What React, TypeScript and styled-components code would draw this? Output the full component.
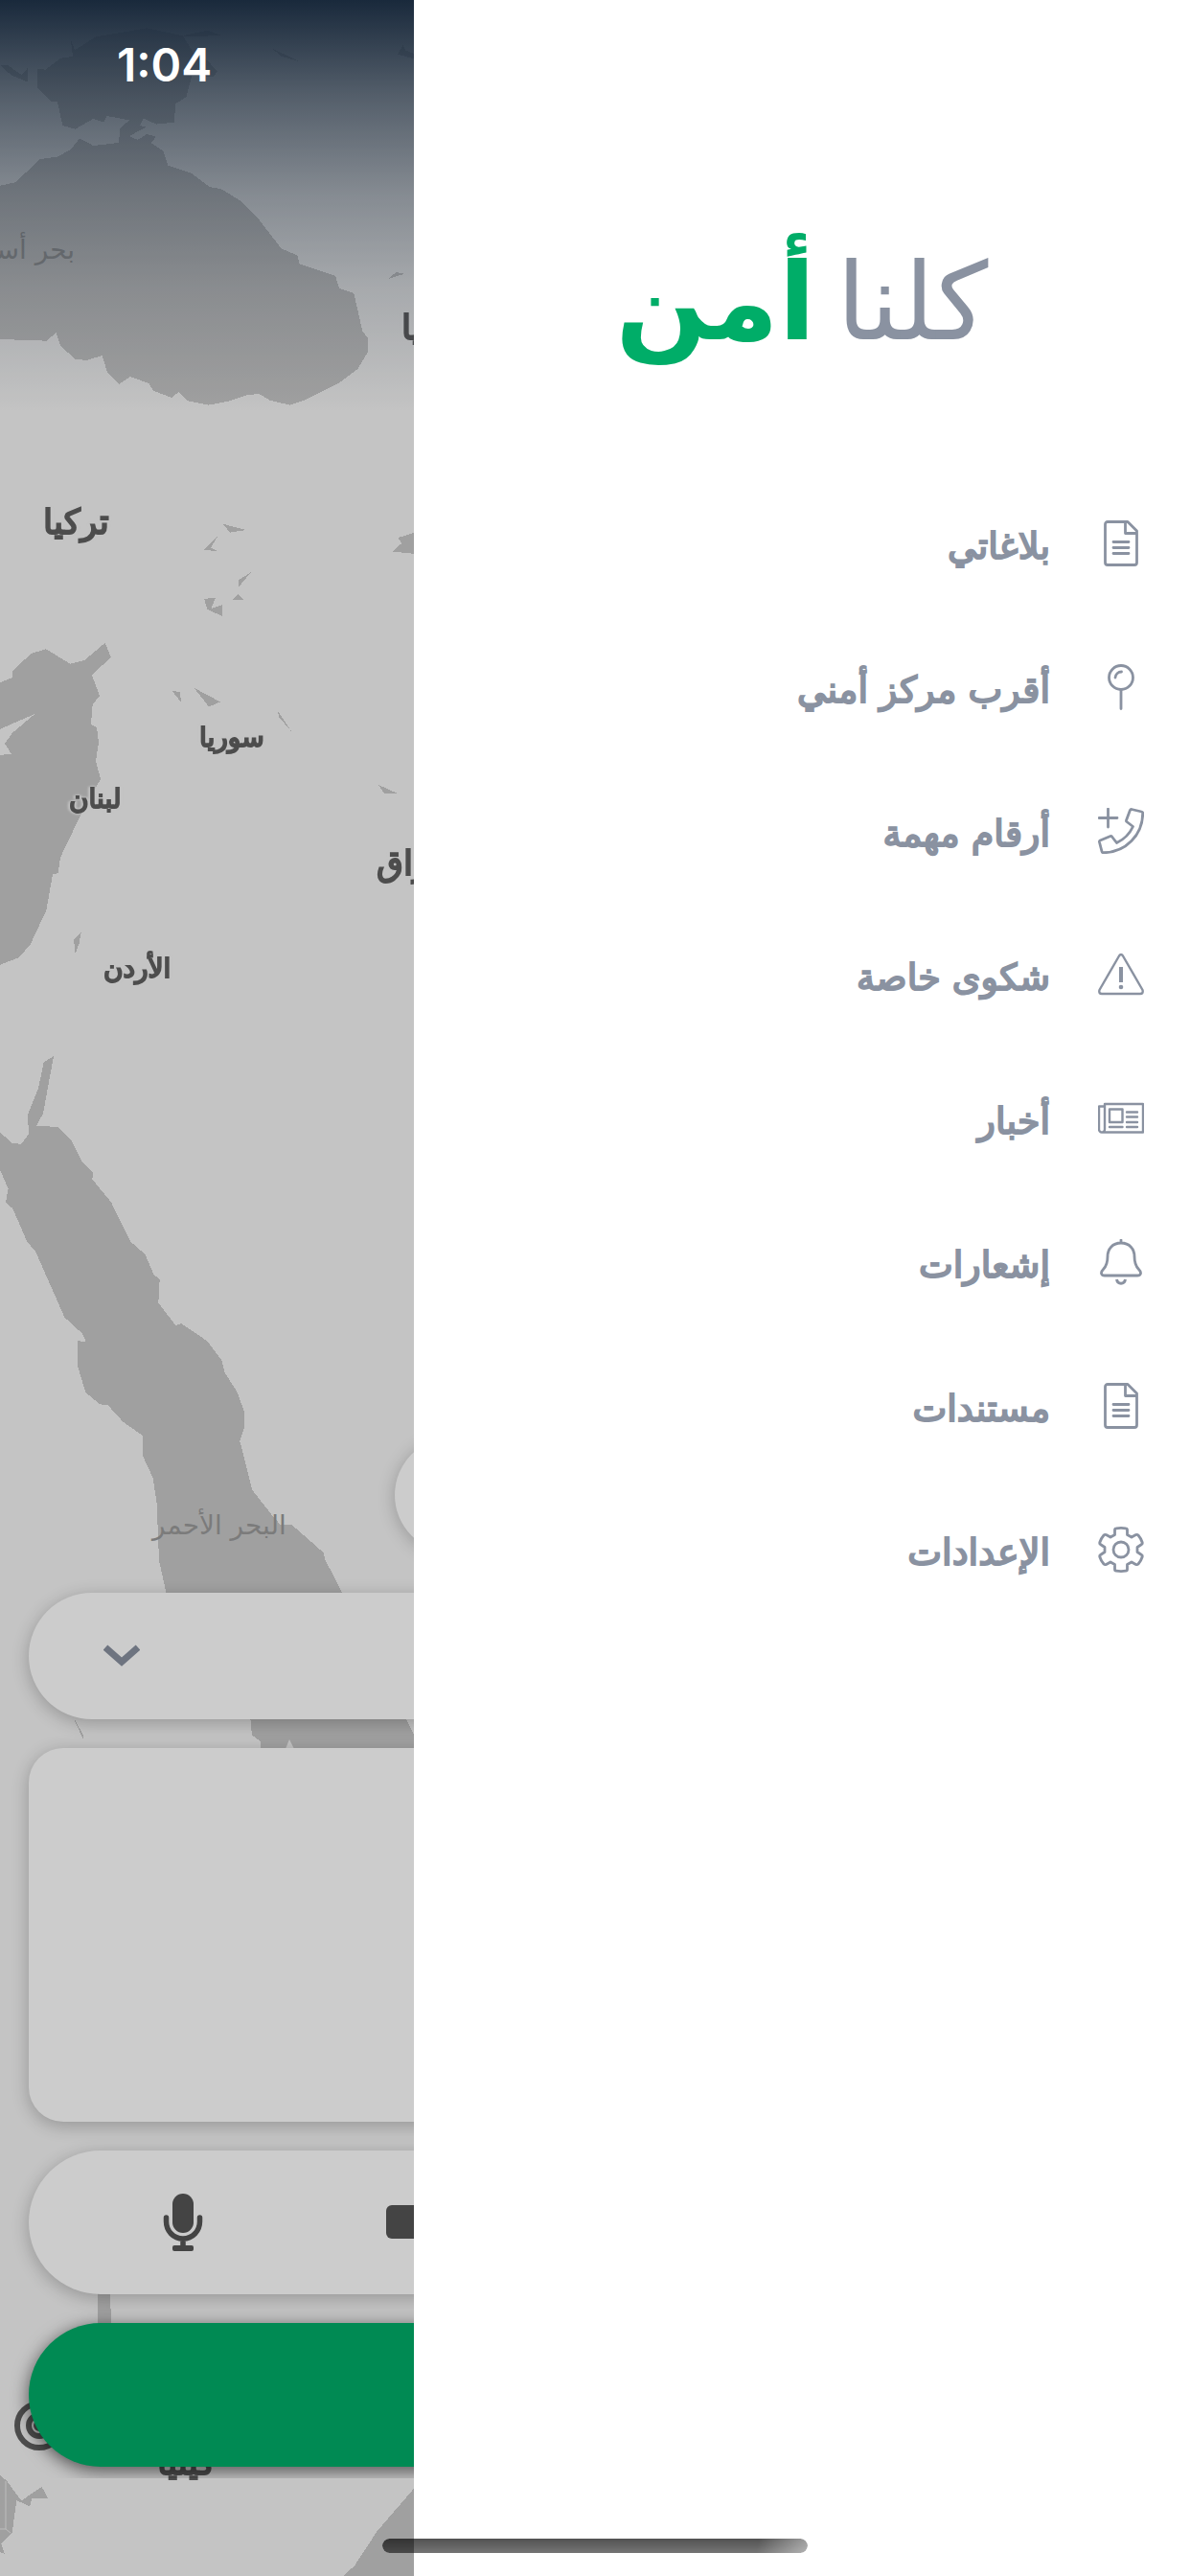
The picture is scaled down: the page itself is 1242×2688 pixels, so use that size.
import React from "react";
import styled, { createGlobalStyle } from "styled-components";

const GREEN = "#00ad68";
const SLATE = "#8a92a1";
const ARABIC = '"DejaVu Sans", "Noto Sans", sans-serif';

const GlobalStyle = createGlobalStyle`
  *, *::before, *::after { box-sizing: border-box; }
  body { margin: 0; background: #c4c4c4; font-family: ${ARABIC}; }
  button, select, textarea { font: inherit; border: 0; margin: 0; padding: 0; }
`;

const Screen = styled.div`
  position: relative;
  display: grid;
  min-height: 100vh;
  overflow: hidden;
  background: #f5f5f5;
  > * { grid-area: 1 / 1; min-width: 0; }
`;

/* ---------- map ---------- */

const MapLayer = styled.div`
  position: absolute;
  inset: 0;
  overflow: hidden;
`;

const MapDrawing = styled.svg`
  display: block;
  width: 100%;
  height: 100%;
`;

const MapLabel = styled.span<{ $x: number; $y: number; $size: number; $sea?: boolean; $end?: boolean }>`
  position: absolute;
  top: ${(p) => p.$y}px;
  ${(p) => (p.$end ? `right: calc(100% - ${p.$x}px);` : `left: ${p.$x}px;`)}
  font-size: ${(p) => p.$size}px;
  line-height: 40px;
  color: ${(p) => (p.$sea ? "#9a9a9a" : "#616161")};
  -webkit-text-stroke: ${(p) => (p.$sea ? 0 : 2)}px currentColor;
  white-space: nowrap;
  filter: ${(p) => (p.$sea ? "none" : "drop-shadow(2px 0 1px #f5f5f5) drop-shadow(-2px 0 1px #f5f5f5)")};
`;

const TopFade = styled.div`
  position: absolute;
  inset: 0 0 auto;
  height: 430px;
  background: linear-gradient(
    rgba(32, 52, 75, 1) 0%,
    rgba(32, 52, 75, 0.66) 23%,
    rgba(32, 52, 75, 0.37) 47%,
    rgba(32, 52, 75, 0.17) 70%,
    rgba(32, 52, 75, 0) 100%
  );
`;

const labels = [
  { text: "بحر أسود", x: 78, y: 241, size: 28, sea: true, end: true },
  { text: "روسيا", x: 419, y: 322, size: 36 },
  { text: "تركيا", x: 45, y: 525, size: 36 },
  { text: "سوريا", x: 208, y: 750, size: 28 },
  { text: "لبنان", x: 72, y: 814, size: 28 },
  { text: "العراق", x: 393, y: 881, size: 36 },
  { text: "الأردن", x: 108, y: 991, size: 28 },
  { text: "البحر الأحمر", x: 159, y: 1572, size: 28, sea: true },
  { text: "كينيا", x: 164, y: 2550, size: 36 },
];

function WorldMap() {
  return (
    <MapLayer>
      <MapDrawing viewBox="0 0 1242 2688" preserveAspectRatio="xMinYMin slice" aria-hidden="true">
        <g fill="#c9c9c9" shapeRendering="crispEdges">
          <g transform="scale(.33333)">
            <path d="M0 581L48 571L126 498L180 491L223 467L249 433L292 456L372 447L376 402L405 376L334 363L324 383L292 372L236 404L196 393L180 319L160 318L118 275V216L143 218L190 182L228 177L221 122L234 157L300 115L460 88L573 112L605 165L650 190L681 224L668 240L601 236L583 304L549 325L546 383L489 389L449 370L438 394L460 396L405 426L431 438L460 420L489 428L473 447L511 473L526 518L597 541L658 586L692 591L750 627L812 689L881 778L932 800L937 826L1050 863L1062 903L1108 918L1135 1037L1152 1058V1102L1120 1155L1060 1200L953 1253L907 1268L845 1253L811 1233L773 1237L720 1255L653 1268L588 1255L560 1227L537 1245L480 1223L466 1200L407 1179L373 1203L336 1165L320 1113L270 1128L236 1124L189 1083L176 1041L146 1067L0 1062Z" />
            <path d="M0 204H24L67 234L87 213V257L35 235ZM850 150L935 192L880 176ZM1215 873L1240 852L1267 857ZM1245 170L1262 141L1270 158L1296 168V184ZM570 112L650 95L690 110L610 115Z" />
          </g>
          <g transform="translate(0 460) scale(.33333 .38265)">
            <path d="M0 659L38 646V628L98 580L144 568L220 608L265 598L329 551L347 590L288 639L312 695L290 719L285 773L303 782L309 823L300 873L315 922L245 1034L189 1136L182 1179L165 1182L145 1280L93 1377L56 1410L0 1429V857L36 854L15 826L38 797L109 745L0 786Z" />
            <path d="M699 227L771 243L720 250ZM684 257L660 292L684 302L638 297ZM786 358L747 399V380ZM728 433L745 418L763 433ZM639 431L675 428L661 458L696 447V478L650 460ZM539 682L564 685L567 713ZM608 674L690 712L654 725ZM870 737L912 792L873 753ZM1185 938L1248 963H1204ZM254 1341L248 1370L236 1398L231 1361ZM1229 302L1257 280L1247 264L1296 251V308Z" />
          </g>
          <g transform="translate(0 1060) scale(.33333 .38265)">
            <path d="M0 318L38 347L66 350L90 322L87 269L120 198L137 126L168 110L135 266L114 300L182 303L225 342L257 397L291 428L289 446L348 508L408 615L455 651L481 705L500 719L496 783L550 844L567 839L649 887L694 939L703 972L742 1025L765 1080V1122L751 1160L790 1293L850 1360L878 1388H914L1013 1464L1018 1483L1200 1790L1330 2020H816V1978L789 1962L783 1905L600 1800L519 1568L498 1485L491 1330L479 1260L447 1200V1145L385 1107L338 1062L312 1059L268 1027L243 955V886L270 890L257 866L202 822L110 640L86 618L40 526L18 508L26 472L0 420Z" />
            <path d="M225 1905L260 1960V1972Z" />
          </g>
          <g transform="translate(0 2200) scale(.33333)">
            <path d="M306 560H345L348 690H306ZM0 1149L20 1165L67 1228L131 1185L150 1220H100L93 1247L67 1234L52 1228L38 1328L4 1362L15 1395L0 1390ZM1296 1190L1180 1325L1110 1432L1075 1464H1330V1160Z" />
          </g>
        </g>
        <path d="M298 1825L302 1815L307 1825Z" fill="#f5f5f5" />
        <path d="M6 2589V2639L11 2643M0 2639H6" fill="none" stroke="#ececec" />
        <g fill="none" stroke="#616161" strokeWidth="6">
          <circle cx="41" cy="2531" r="23" />
          <circle cx="41" cy="2531" r="11" />
          <circle cx="41" cy="2531" r="3" />
        </g>
      </MapDrawing>
      {labels.map((l) => (
        <MapLabel key={l.text} dir="rtl" $x={l.x} $y={l.y} $size={l.size} $sea={l.sea} $end={l.end}>
          {l.text}
        </MapLabel>
      ))}
      <TopFade />
    </MapLayer>
  );
}

/* ---------- report form behind the drawer ---------- */

const ReportForm = styled.form`
  position: relative;
  display: flex;
  flex-direction: column;
  justify-content: flex-end;
  gap: 30px;
  margin-bottom: 102px;
  padding: 0 30px 12px;
  overflow: hidden;
`;

const LocateButton = styled.button`
  width: 120px;
  height: 120px;
  margin: 0 0 12px 382px;
  border-radius: 50%;
  background: #fff;
  box-shadow: 0 3px 18px rgba(0, 0, 0, 0.22);
`;

const cardShadow = "0 4px 18px rgba(0, 0, 0, 0.24)";

const SelectField = styled.label`
  display: flex;
  flex-direction: row-reverse;
  align-items: center;
  height: 132px;
  padding: 0 78px;
  border-radius: 66px;
  background: #fff;
  box-shadow: ${cardShadow};
`;

const TypeSelect = styled.select`
  flex: 1;
  min-width: 0;
  height: 100%;
  appearance: none;
  background: transparent;
`;

const Details = styled.textarea`
  height: 390px;
  padding: 36px;
  border-radius: 36px;
  resize: none;
  background: #fff;
  box-shadow: ${cardShadow};
`;

const MediaBar = styled.div`
  display: flex;
  align-items: center;
  gap: 190px;
  height: 150px;
  padding: 0 139px;
  border-radius: 75px;
  background: #fff;
  box-shadow: ${cardShadow};
`;

const MediaButton = styled.button`
  display: flex;
  background: transparent;
  color: #555;
`;

const SendButton = styled.button`
  height: 150px;
  border-radius: 75px;
  background: ${GREEN};
  box-shadow: 0 4px 18px rgba(0, 0, 0, 0.6);
`;

const Scrim = styled.div`
  position: absolute;
  inset: 0;
  background: rgba(0, 0, 0, 0.2);
`;

/* ---------- system chrome ---------- */

const StatusTime = styled.time`
  position: absolute;
  top: 38px;
  left: 122px;
  font-family: Inter, sans-serif;
  font-size: 48px;
  font-weight: 600;
  line-height: 60px;
  color: #fff;
`;

const HomeIndicator = styled.div`
  position: absolute;
  bottom: 24px;
  left: 50%;
  width: 444px;
  height: 15px;
  margin-left: -222px;
  border-radius: 8px;
  background: linear-gradient(rgba(0, 0, 0, 0.68), rgba(0, 0, 0, 0.54));
  mask-image: linear-gradient(100deg, #000 88%, rgba(0, 0, 0, 0.55) 100%);
`;

/* ---------- drawer ---------- */

const Drawer = styled.aside`
  position: relative;
  justify-self: end;
  width: calc(100% - 432px);
  padding-top: 240px;
  background: #fff;
`;

const Logo = styled.h1`
  display: flex;
  align-items: center;
  justify-content: center;
  gap: 22px;
  height: 150px;
  margin: 0 0 102px;
  font-size: 112px;
  line-height: 150px;
  font-weight: 400;
  color: ${SLATE};
`;

const LogoAccent = styled.strong`
  font-weight: 700;
  color: ${GREEN};
`;

const MenuList = styled.ul`
  margin: 0;
  padding: 0;
  list-style: none;
`;

const MenuLink = styled.a`
  display: flex;
  align-items: center;
  gap: 50px;
  height: 150px;
  padding: 0 48px;
  color: ${SLATE};
  text-decoration: none;
`;

const MenuLabel = styled.span`
  padding-top: 6px;
  font-size: 38px;
  line-height: 48px;
  -webkit-text-stroke: 2px currentColor;
`;

const MenuIcon = styled.svg`
  flex: none;
  width: 48px;
  height: 48px;
  fill: none;
  stroke: currentColor;
  stroke-width: 2.8;
  stroke-linecap: round;
  stroke-linejoin: round;
`;

const DocumentIcon = () => (
  <MenuIcon viewBox="0 0 48 48" aria-hidden="true">
    <path d="M10 1.500H31L40.500 11V44A2.500 2.500 0 0 1 38 46.500H10A2.500 2.500 0 0 1 7.500 44V4A2.500 2.500 0 0 1 10 1.500ZM28.500 1.500V13.500H40.500M16 22.500H32M16 28.500H32M16 34.500H32" />
  </MenuIcon>
);

const PinIcon = () => (
  <MenuIcon viewBox="0 0 48 48" aria-hidden="true">
    <circle cx="24" cy="14" r="12.500" />
    <path d="M24 27V46.500M18 14A6.500 6.500 0 0 1 24.500 8" />
  </MenuIcon>
);

const PhoneIcon = () => (
  <MenuIcon viewBox="0 0 48 48" aria-hidden="true">
    <path d="M10.500 1V20M1 10.500H20" />
    <path d="M35 1.500L45.500 4A1.500 1.500 0 0 1 46.700 5.500C46.700 28 29 46.700 5.500 46.700A1.500 1.500 0 0 1 4 45.500L1.400 35.500A1.500 1.500 0 0 1 2.200 34L13 29.500A1.500 1.500 0 0 1 14.500 30L19.500 36.500C27 33 33 27 36.500 19.500L30 14.500A1.500 1.500 0 0 1 29.500 13L33.500 2.300A1.500 1.500 0 0 1 35 1.500Z" />
  </MenuIcon>
);

const WarningIcon = () => (
  <MenuIcon viewBox="0 0 48 48" aria-hidden="true">
    <path d="M22 4.500Q24 1.500 26 4.500L46.500 40Q47.500 44 44 44H4Q0.500 44 1.500 40Z" strokeWidth="2.400" />
    <path d="M24 16V32" strokeWidth="4" strokeLinecap="butt" />
    <circle cx="24" cy="37" r="2.300" fill="currentColor" stroke="none" />
  </MenuIcon>
);

const NewsIcon = () => (
  <MenuIcon viewBox="0 0 48 48" aria-hidden="true">
    <g strokeWidth="2.400">
      <path d="M7 9H47V38.500H4A3 3 0 0 1 1 35.500V11.500H7M7 9V35.500A3 3 0 0 1 4 38.500" />
      <path d="M12 14.500H25.500V28H12ZM30 17.500H41M30 22.500H41M30 28H41M12 33H25.500M30 33H41" />
    </g>
  </MenuIcon>
);

const BellIcon = () => (
  <MenuIcon viewBox="0 0 48 48" aria-hidden="true">
    <path d="M24 1V4M24 4C15 4 10 10.500 10 18C10 25 9 28 5.500 31.500C2 35 3.500 38 7 38H41C44.500 38 46 35 42.500 31.500C39 28 38 25 38 18C38 10.500 33 4 24 4Z" />
    <path d="M19.500 42C20.500 47.500 27.500 47.500 28.500 42" strokeWidth="3" strokeLinecap="butt" />
  </MenuIcon>
);

const GearIcon = () => (
  <MenuIcon viewBox="0 0 48 48" aria-hidden="true">
    <path d="M17.500 3.500Q17.500 2 19 1.800Q24 1 29 1.800Q30.500 2 30.500 3.500V8.500L35 11L39.500 8.500Q41 8 42 9Q45 12.500 46.200 16.500Q46.500 18 45.500 18.500L41 21.500V26.500L45.500 29.500Q46.500 30 46.200 31.500Q45 35.500 42 39Q41 40 39.500 39.500L35 37L30.500 39.500V44.500Q30.500 46 29 46.200Q24 47 19 46.200Q17.500 46 17.500 44.500V39.500L13 37L8.500 39.500Q7 40 6 39Q3 35.500 1.800 31.500Q1.500 30 2.500 29.500L7 26.500V21.500L2.500 18.500Q1.500 18 1.800 16.500Q3 12.500 6 9Q7 8 8.500 8.500L13 11L17.500 8.500Z" />
    <circle cx="24" cy="24" r="8" />
  </MenuIcon>
);

const menu = [
  { label: "بلاغاتي", Icon: DocumentIcon },
  { label: "أقرب مركز أمني", Icon: PinIcon },
  { label: "أرقام مهمة", Icon: PhoneIcon },
  { label: "شكوى خاصة", Icon: WarningIcon },
  { label: "أخبار", Icon: NewsIcon },
  { label: "إشعارات", Icon: BellIcon },
  { label: "مستندات", Icon: DocumentIcon },
  { label: "الإعدادات", Icon: GearIcon },
];

export default function App() {
  return (
    <Screen>
      <WorldMap />
      <ReportForm>
        <LocateButton type="button" aria-label="موقعي" />
        <SelectField>
          <TypeSelect aria-label="نوع البلاغ" defaultValue="">
            <option value="" />
          </TypeSelect>
          <svg width="38" height="24" viewBox="0 0 38 24" fill="none" stroke={SLATE} strokeWidth="7" aria-hidden="true">
            <path d="M2 3L19 18L36 3" />
          </svg>
        </SelectField>
        <Details aria-label="تفاصيل البلاغ" />
        <MediaBar>
          <MediaButton type="button" aria-label="تسجيل صوت">
            <svg width="44" height="60" viewBox="0 0 44 60" fill="currentColor">
              <rect x="11" width="22" height="41" rx="11" />
              <rect x="11" y="54" width="22" height="6" rx="2" />
              <path d="M4.500 25V29C4.500 39 12 47 22 47S39.500 39 39.500 29V25M22 47V56" fill="none" stroke="currentColor" strokeWidth="5.500" strokeLinecap="round" />
            </svg>
          </MediaButton>
          <MediaButton type="button" aria-label="تسجيل فيديو">
            <svg width="60" height="36" viewBox="0 0 60 36" fill="currentColor">
              <rect width="40" height="35" rx="6" />
              <path d="M43 13L60 3V32L43 22Z" />
            </svg>
          </MediaButton>
        </MediaBar>
        <SendButton type="submit" aria-label="إرسال" />
      </ReportForm>
      <Scrim />
      <StatusTime>1:04</StatusTime>
      <Drawer dir="rtl">
        <Logo>
          <span>كلنا</span>
          <LogoAccent>أمن</LogoAccent>
        </Logo>
        <nav>
          <MenuList>
            {menu.map(({ label, Icon }) => (
              <li key={label}>
                <MenuLink href="#">
                  <Icon />
                  <MenuLabel>{label}</MenuLabel>
                </MenuLink>
              </li>
            ))}
          </MenuList>
        </nav>
      </Drawer>
      <HomeIndicator />
      <GlobalStyle />
    </Screen>
  );
}
